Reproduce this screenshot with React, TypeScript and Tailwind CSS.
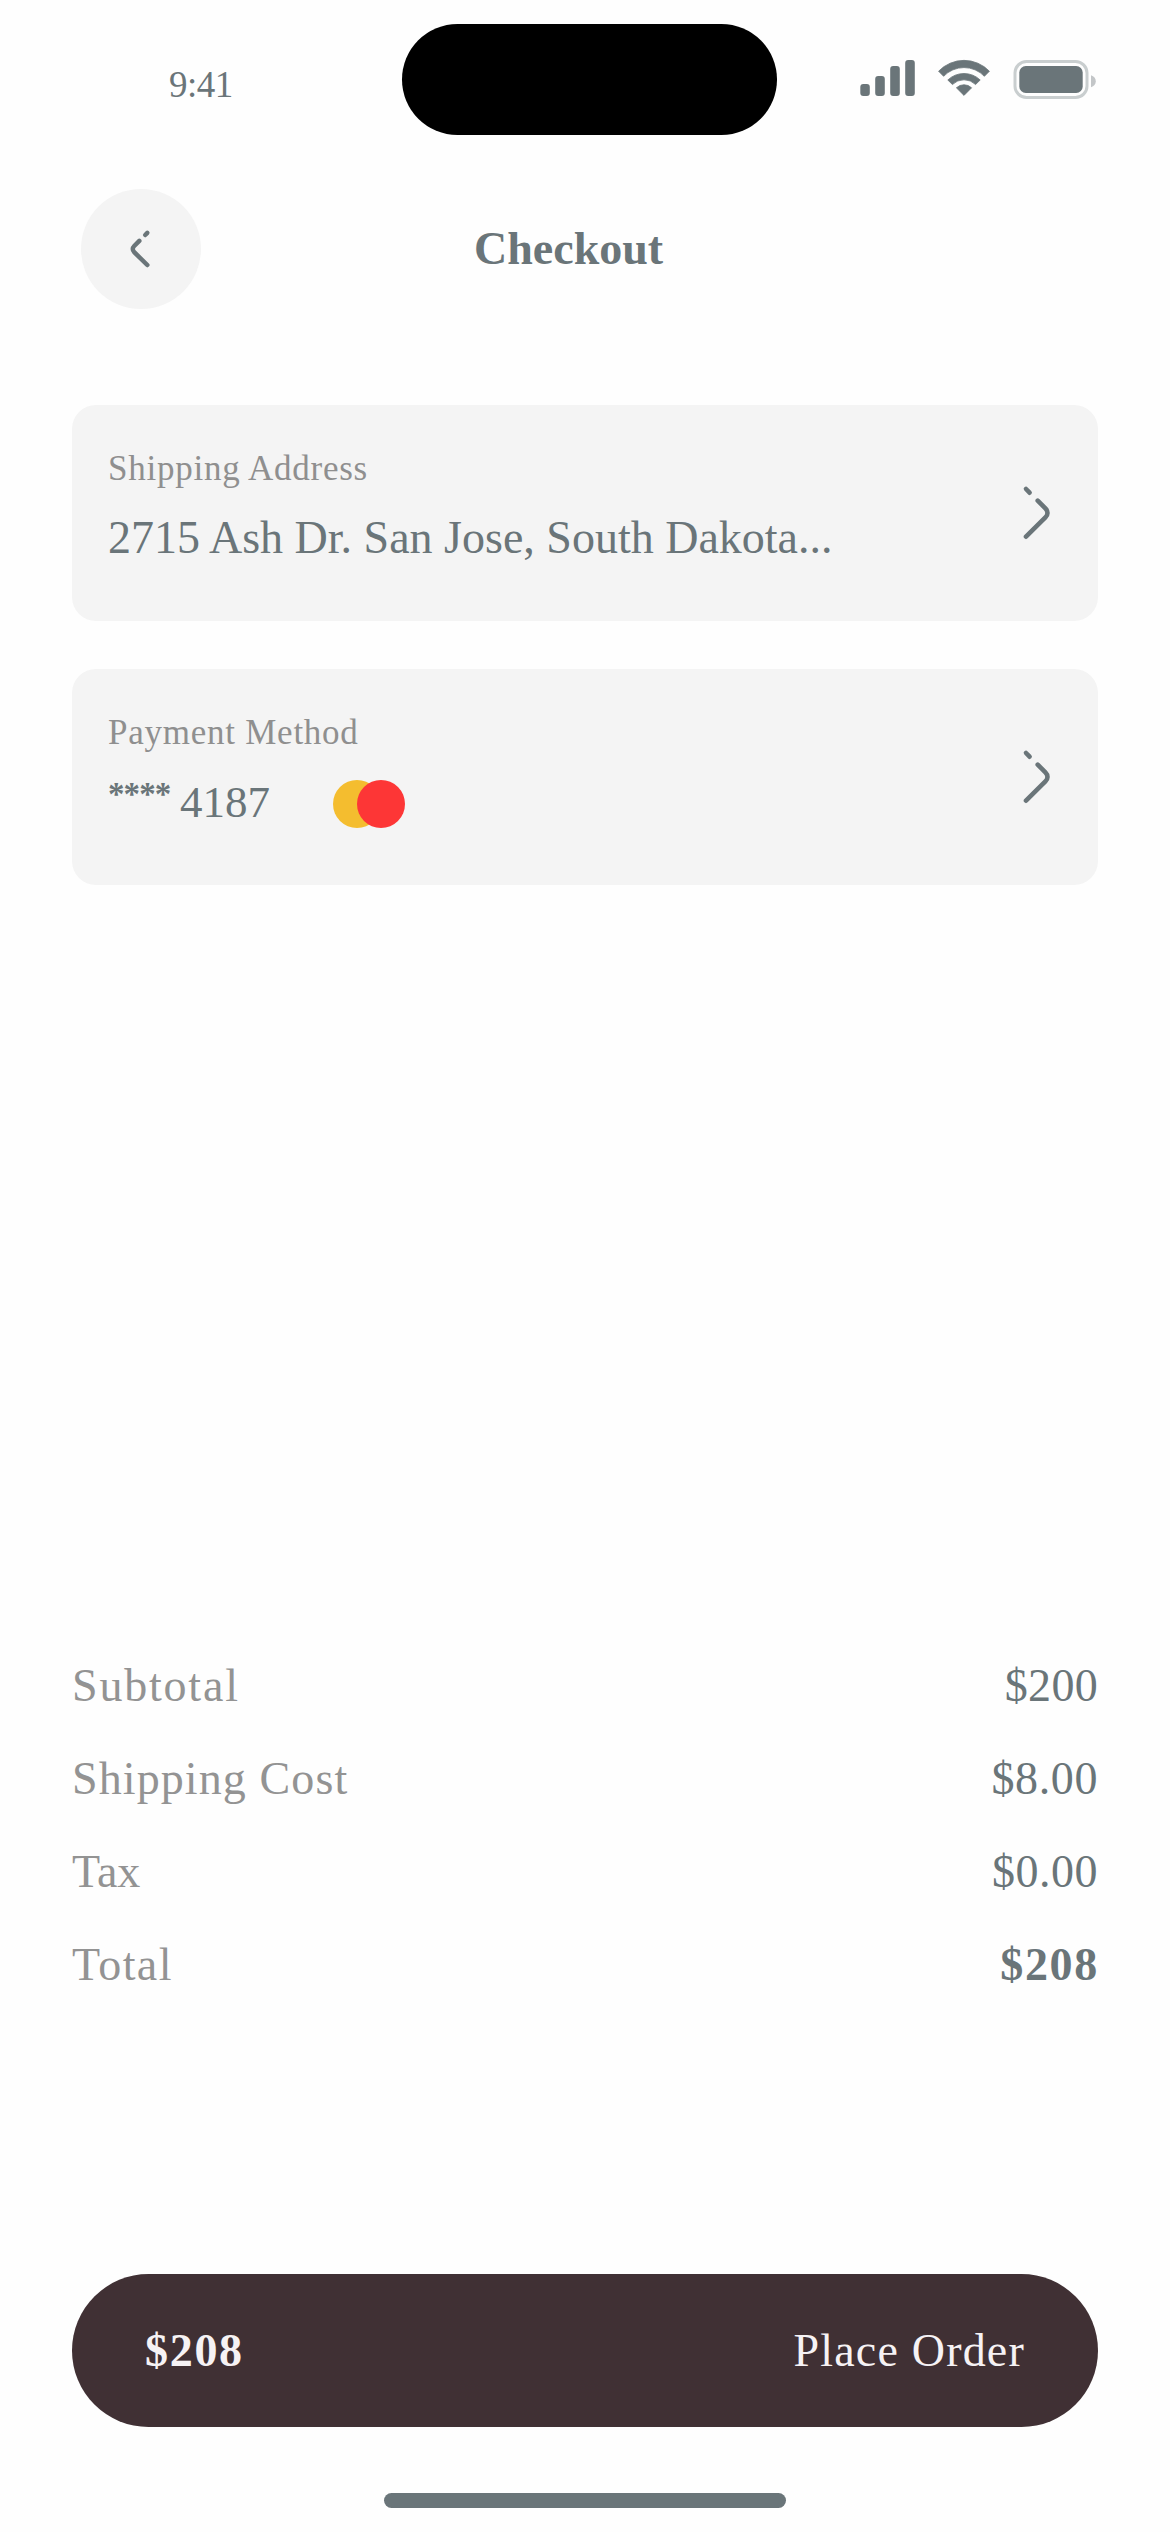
const ink = "#6A7579";

function SignalIcon() {
  return (
    <svg width="56" height="38" viewBox="0 0 56 38" fill={ink}>
      <rect x="0.3" y="25" width="9.5" height="12" rx="3" />
      <rect x="15.2" y="17" width="9.6" height="20" rx="3" />
      <rect x="30.2" y="7" width="9.6" height="30" rx="3" />
      <rect x="45.2" y="1" width="9.6" height="36" rx="3" />
    </svg>
  );
}

function WifiIcon() {
  return (
    <svg width="54" height="38" viewBox="0 0 54 38" fill={ink} stroke={ink} strokeWidth="0.8" strokeLinejoin="round">
      <path d="M1.6 12.2A35.2 35.2 0 0 1 52.4 12.2L47.4 17.3A28.2 28.2 0 0 0 6.6 17.3Z" />
      <path d="M10.8 21A23.4 23.4 0 0 1 43.2 21L38.6 25.5A16.6 16.6 0 0 0 15.4 25.5Z" />
      <path d="M19.4 28.8A11 11 0 0 1 34.6 28.8L27 36.4Z" />
    </svg>
  );
}

function BatteryIcon() {
  return (
    <svg width="84" height="40" viewBox="0 0 84 40">
      <rect x="2" y="2.5" width="72" height="36" rx="11.5" fill="none" stroke="#C9CECF" strokeWidth="3" />
      <rect x="6.3" y="7" width="63.4" height="27" rx="6.5" fill={ink} />
      <path d="M78 16.2C81 17 82.8 19.4 82.8 22.2S81 27.4 78 28.2Z" fill="#C3C6C8" />
    </svg>
  );
}

function BackIcon() {
  return (
    <svg width="48" height="48" viewBox="0 0 48 48" fill="none" stroke={ink} strokeWidth="4.5" strokeLinecap="round">
      <path d="M30.3 7.9L28.2 10" />
      <path d="M22.3 15.9L17.2 21C15.3 22.9 15.3 25.3 17.2 27.2L30.3 40" />
    </svg>
  );
}

function NextIcon() {
  return (
    <svg width="72" height="72" viewBox="0 0 72 72" fill="none" stroke={ink} strokeWidth="4.6" strokeLinecap="round">
      <path d="M24 12L27.6 15.7" />
      <path d="M35.7 23.7L43.4 31.4C46.2 34.2 46.2 37.6 43.4 40.4L24 59.7" />
    </svg>
  );
}

function StatusBar() {
  return (
    <div className="flex h-[135px] items-start pt-6">
      <div className="w-[402px] pl-[169px] pt-[36px] text-[37px] leading-[50px] tracking-[-0.5px]">9:41</div>
      <div className="h-[111px] w-[375px] rounded-full bg-black" />
      <div className="flex pl-[83px] pt-[35px]">
        <SignalIcon />
        <div className="ml-[21px]"><WifiIcon /></div>
        <div className="ml-[22px]"><BatteryIcon /></div>
      </div>
    </div>
  );
}

const rows = [
  { label: "Subtotal", value: "$200", labelClass: "tracking-[1.8px]", valueClass: "tracking-[0.3px]" },
  { label: "Shipping Cost", value: "$8.00", labelClass: "tracking-[1.1px]", valueClass: "tracking-[0.6px]" },
  { label: "Tax", value: "$0.00", labelClass: "tracking-[0px]", valueClass: "tracking-[0.5px]" },
  { label: "Total", value: "$208", labelClass: "tracking-[1.4px]", valueClass: "font-bold tracking-[1.7px] -mr-[1px]" },
];

export default function App() {
  return (
    <div className="flex h-[2532px] w-[1170px] flex-col overflow-hidden whitespace-nowrap bg-[#FEFEFE] font-['Liberation_Serif',serif] text-[46px] leading-[60px] text-[#6A7579]">
      <StatusBar />
      <header className="mt-[54px] flex h-[120px] items-center pl-[81px]">
        <button className="flex size-[120px] items-center justify-center rounded-full bg-[#F4F4F4]"><BackIcon /></button>
        <h1 className="ml-[273px] font-bold">Checkout</h1>
      </header>
      <main className="mx-[72px] mt-24 flex flex-col gap-12">
        <button className="flex h-[216px] items-start justify-between rounded-3xl bg-[#F4F4F4] pl-9 pr-6 text-left">
          <div>
            <p className="mt-[41px] text-[35px] leading-[45px] tracking-[0.75px] text-[#8F8F8F]">Shipping Address</p>
            <p className="mt-[17px]">2715 Ash Dr. San Jose, South Dakota...</p>
          </div>
          <div className="mt-[72px]"><NextIcon /></div>
        </button>
        <button className="flex h-[216px] items-start justify-between rounded-3xl bg-[#F4F4F4] pl-9 pr-6 text-left">
          <div>
            <p className="mt-[41px] text-[35px] leading-[45px] tracking-[0.75px] text-[#8F8F8F]">Payment Method</p>
            <div className="mt-[17px] flex h-[60px]">
              <p className="flex w-[225px]">
                <span className="-mt-[8px] w-[72px] text-[33px] font-bold tracking-[-0.9px]">****</span>
                <span className="text-[45px]">4187</span>
              </p>
              <svg className="mt-[8px]" width="72" height="48" viewBox="0 0 72 48">
                <circle cx="24" cy="24" r="24" fill="#F4BD2F" />
                <circle cx="48" cy="24" r="24" fill="#FD3636" />
              </svg>
            </div>
          </div>
          <div className="mt-[72px]"><NextIcon /></div>
        </button>
      </main>
      <section className="mx-[72px] mt-[771px] flex flex-col gap-[33px]">
        {rows.map((row) => (
          <div key={row.label} className="flex h-[60px] justify-between">
            <span className={"text-[#939393] " + row.labelClass}>{row.label}</span>
            <span className={row.valueClass}>{row.value}</span>
          </div>
        ))}
      </section>
      <button className="mx-[72px] mt-[279px] flex h-[153px] items-center justify-between rounded-full bg-[#403034] px-[73px] text-[#F6F2F4]">
        <span className="font-bold tracking-[1.7px]">$208</span>
        <span className="tracking-[1.2px]">Place Order</span>
      </button>
      <div className="mx-auto mt-[66px] h-[15px] w-[402px] rounded-full bg-[#6A7579]" />
    </div>
  );
}
